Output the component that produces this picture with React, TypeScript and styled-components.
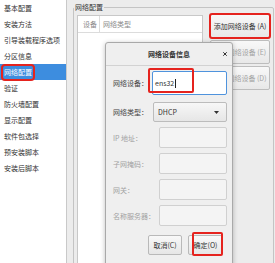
import React from 'react'
import styled, { createGlobalStyle } from 'styled-components'
import { X } from 'lucide-react'

const GlobalStyle = createGlobalStyle`
  html, body {
    margin: 0;
    padding: 0;
  }
  body {
    font-family: "Noto Sans CJK SC", "Noto Sans", sans-serif;
    font-size: 7px;
    color: #333;
  }
  * { box-sizing: border-box; }
`

const Window = styled.div`
  position: relative;
  width: 275px;
  height: 263px;
  overflow: hidden;
  display: flex;
  background: #ececec;
`

const Sidebar = styled.ul`
  margin: 0;
  padding: 0;
  list-style: none;
  width: 67px;
  flex-shrink: 0;
  background: #fff;
  border-right: 1px solid #c9c9c9;
`

const NavItem = styled.li<{ $active?: boolean }>`
  height: 16px;
  display: flex;
  align-items: center;
  padding-left: 4px;
  white-space: nowrap;
  color: ${p => (p.$active ? '#fff' : '#333')};
  background: ${p => (p.$active ? '#3d8ddf' : 'transparent')};
`

const NavLabel = styled.span<{ $marked?: boolean }>`
  display: inline-block;
  height: 13px;
  line-height: 13px;
  padding: 0 1px;
  margin-left: -1px;
  border-radius: 2px;
  outline: ${p => (p.$marked ? '2px solid #e5231e' : 'none')};
`

const Main = styled.div`
  flex: 1;
  padding-left: 6px;
`

const Group = styled.fieldset`
  margin: 0;
  width: 201px;
  height: 290px;
  padding: 1px 3px 0 3px;
  border: 1px solid #c4c4c4;
  border-radius: 2px;
  min-width: 0;
`

const GroupTitle = styled.legend`
  padding: 0 1px;
  margin-left: -3px;
  line-height: 14px;
  color: #333;
`

const GroupBody = styled.div`
  display: flex;
  gap: 7px;
`

const DeviceTable = styled.div`
  width: 126px;
  height: 250px;
  background: #fff;
  border: 1px solid #c8c8c8;
`

const TableHead = styled.div`
  display: flex;
  height: 17px;
  border-bottom: 1px solid #dcdcdc;
  color: #8a8a8a;
`

const HeadCell = styled.div<{ $width?: number }>`
  display: flex;
  align-items: center;
  width: ${p => (p.$width ? `${p.$width}px` : 'auto')};
  flex: ${p => (p.$width ? 'none' : '1')};
  padding-left: ${p => (p.$width ? 5 : 3)}px;
  border-right: ${p => (p.$width ? '1px solid #dcdcdc' : 'none')};
`

const ButtonColumn = styled.div`
  width: 60px;
  display: flex;
  flex-direction: column;
  gap: 2px;
  margin-top: -1px;
`

const ActionButton = styled.div<{ $disabled?: boolean; $marked?: boolean }>`
  height: 24px;
  display: flex;
  align-items: center;
  justify-content: center;
  white-space: nowrap;
  border: 1px solid #bdbdbd;
  border-radius: 2px;
  background: linear-gradient(#f8f8f8, #e8e8e8);
  color: ${p => (p.$disabled ? '#a3a3a3' : '#333')};
  outline: ${p => (p.$marked ? '2px solid #e5231e' : 'none')};
  outline-offset: -1px;
`

const Dialog = styled.div`
  position: absolute;
  left: 105px;
  top: 42px;
  width: 128px;
  height: 225px;
  border: 1px solid #a9a9a9;
  border-radius: 3px 3px 0 0;
  background: #efefef;
  box-shadow: 0 1px 5px rgba(0, 0, 0, 0.25);
`

const TitleBar = styled.div`
  height: 23px;
  display: grid;
  grid-template-columns: 1fr auto 1fr;
  align-items: center;
  border-bottom: 1px solid #d2d2d2;
  font-weight: bold;
  color: #333;
`

const Title = styled.span`
  grid-column: 2;
`

const Close = styled.span`
  grid-column: 3;
  justify-self: end;
  margin-right: 4px;
  display: flex;
  color: #333;
`

const DialogBody = styled.div`
  display: flex;
  flex-direction: column;
  padding: 0 5px 0 7px;
`

const FormRow = styled.div<{ $height: number; $top: number }>`
  display: flex;
  align-items: center;
  height: ${p => p.$height}px;
  margin-top: ${p => p.$top}px;
`

const Label = styled.span<{ $width: number; $muted?: boolean }>`
  width: ${p => p.$width}px;
  flex-shrink: 0;
  white-space: nowrap;
  color: ${p => (p.$muted ? '#a2a2a2' : '#444')};
`

const Entry = styled.div<{ $focused?: boolean; $disabled?: boolean }>`
  position: relative;
  flex: 1;
  height: 100%;
  display: flex;
  align-items: center;
  padding-left: 2px;
  border: 1px solid ${p => (p.$focused ? '#4f93dd' : '#d0d0d0')};
  border-radius: 2px;
  background: ${p => (p.$disabled ? '#f4f4f4' : '#fff')};
  color: #333;
`

const Caret = styled.span`
  width: 1px;
  height: 9px;
  margin-left: 1px;
  background: #222;
`

const Mark = styled.span<{ $left: number; $top: number; $w: number; $h: number }>`
  position: absolute;
  left: ${p => p.$left}px;
  top: ${p => p.$top}px;
  width: ${p => p.$w}px;
  height: ${p => p.$h}px;
  border: 2px solid #e5231e;
  border-radius: 2px;
  pointer-events: none;
`

const Combo = styled.div`
  flex: 1;
  height: 100%;
  display: flex;
  align-items: center;
  justify-content: space-between;
  padding: 0 7px 0 4px;
  border: 1px solid #bcbcbc;
  border-radius: 2px;
  background: linear-gradient(#f7f7f7, #e6e6e6);
  color: #333;
`

const Footer = styled.div`
  display: flex;
  justify-content: flex-end;
  gap: 6px;
  margin-top: 9px;
  padding-right: 4px;
`

const DialogButton = styled.div<{ $width: number }>`
  position: relative;
  width: ${p => p.$width}px;
  height: 20px;
  display: flex;
  align-items: center;
  justify-content: center;
  white-space: nowrap;
  border: 1px solid #b9b9b9;
  border-radius: 2px;
  background: linear-gradient(#f8f8f8, #e6e6e6);
  color: #333;
`

const navItems = [
  '基本配置',
  '安装方法',
  '引导装载程序选项',
  '分区信息',
  '网络配置',
  '验证',
  '防火墙配置',
  '显示配置',
  '软件包选择',
  '预安装脚本',
  '安装后脚本',
]

const disabledFields = ['IP 地址：', '子网掩码：', '网关：', '名称服务器：']

export default function App() {
  return (
    <>
      <GlobalStyle />
      <Window>
        <Sidebar>
          {navItems.map(item => (
            <NavItem key={item} $active={item === '网络配置'}>
              <NavLabel $marked={item === '网络配置'}>{item}</NavLabel>
            </NavItem>
          ))}
        </Sidebar>

        <Main>
          <Group>
            <GroupTitle>网络配置</GroupTitle>
            <GroupBody>
              <DeviceTable>
                <TableHead>
                  <HeadCell $width={22}>设备</HeadCell>
                  <HeadCell>网络类型</HeadCell>
                </TableHead>
              </DeviceTable>
              <ButtonColumn>
                <ActionButton $marked>添加网络设备 (A)</ActionButton>
                <ActionButton $disabled>编辑网络设备 (E)</ActionButton>
                <ActionButton $disabled>删除网络设备 (D)</ActionButton>
              </ButtonColumn>
            </GroupBody>
          </Group>
        </Main>

        <Dialog>
          <TitleBar>
            <Title>网络设备信息</Title>
            <Close>
              <X size={6} strokeWidth={4} />
            </Close>
          </TitleBar>
          <DialogBody>
            <FormRow $height={24} $top={5}>
              <Label $width={39}>网络设备：</Label>
              <Entry $focused>
                ens32
                <Caret />
                <Mark $left={-5} $top={-4} $w={46} $h={25} />
              </Entry>
            </FormRow>
            <FormRow $height={20} $top={7}>
              <Label $width={40}>网络类型：</Label>
              <Combo>
                DHCP
                <svg width="5" height="3" viewBox="0 0 5 3">
                  <path d="M0 0h5L2.5 3z" fill="#333" />
                </svg>
              </Combo>
            </FormRow>
            {disabledFields.map(field => (
              <FormRow key={field} $height={21} $top={5}>
                <Label $width={46} $muted>
                  {field}
                </Label>
                <Entry $disabled />
              </FormRow>
            ))}
            <Footer>
              <DialogButton $width={34}>取消(C)</DialogButton>
              <DialogButton $width={35}>
                确定(O)
                <Mark $left={3} $top={-4} $w={31} $h={24} />
              </DialogButton>
            </Footer>
          </DialogBody>
        </Dialog>
      </Window>
    </>
  )
}
